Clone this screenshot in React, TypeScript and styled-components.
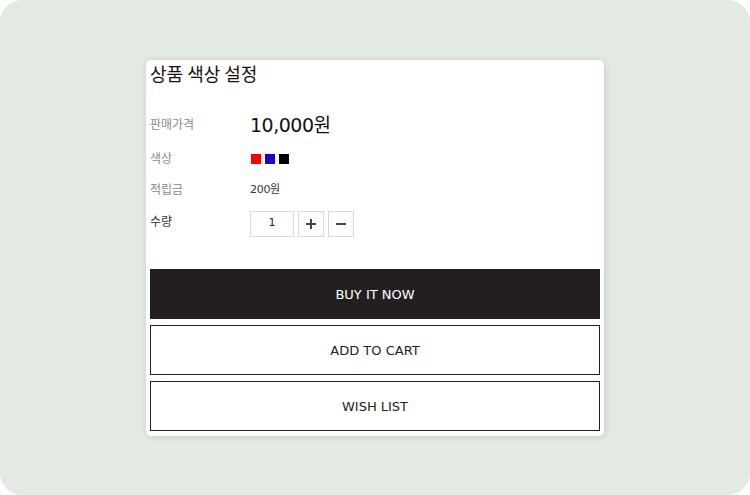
import styled, { createGlobalStyle } from 'styled-components';

const GlobalStyle = createGlobalStyle`
  html, body {
    margin: 0;
    padding: 0;
    background: #ffffff;
  }
  body {
    font-family: "DejaVu Sans", "Noto Sans CJK KR", sans-serif;
  }
  * { box-sizing: border-box; }
`

const Page = styled.div`
  width: 750px;
  height: 495px;
  background-color: #e3eae2;
  border-radius: 22px;
  display: flex;
  justify-content: center;
  align-items: flex-start;
  padding-top: 60px;
`

const Card = styled.div`
  width: 458px;
  background: #ffffff;
  border-radius: 5px;
  padding: 0 4px 5px;
  box-shadow: 1px 1px 7px rgba(60, 80, 60, 0.18);
`

const Title = styled.h2`
  margin: 0;
  font-family: "Noto Sans CJK KR", sans-serif;
  font-weight: 400;
  font-size: 18px;
  line-height: 27px;
  color: #111;
`

const InfoList = styled.div`
  display: flex;
  flex-direction: column;
  padding-top: 21px;
`

const Row = styled.div<{ $h: number; $top?: boolean }>`
  display: grid;
  grid-template-columns: 100px 1fr;
  align-items: ${(p) => (p.$top ? 'start' : 'center')};
  height: ${(p) => p.$h}px;
  padding-top: ${(p) => (p.$top ? '11px' : '0')};
`

const Label = styled.span<{ $dark?: boolean }>`
  font-family: "Noto Sans CJK KR", sans-serif;
  font-size: 12px;
  color: ${(p) => (p.$dark ? '#333' : '#8a8a8a')};
  padding-top: ${(p) => (p.$dark ? '1px' : '0')};
`

const Price = styled.span`
  font-size: 19px;
  color: #111;
  letter-spacing: -0.5px;
`

const Small = styled.span`
  font-size: 11px;
  color: #333;
  letter-spacing: -0.3px;
`

const Swatches = styled.div`
  display: flex;
  gap: 4px;
  padding-left: 1px;
  padding-top: 3px;
`

const Swatch = styled.span<{ $color: string }>`
  width: 10px;
  height: 10px;
  background: ${(p) => p.$color};
`

const Qty = styled.div`
  display: flex;
  gap: 4px;
`

const QtyInput = styled.div`
  width: 44px;
  height: 26px;
  border: 1px solid #d8d8d8;
  display: flex;
  align-items: center;
  justify-content: center;
  font-size: 11px;
  color: #222;
  padding-bottom: 3px;
`

const QtyButton = styled.button`
  width: 26px;
  height: 26px;
  border: 1px solid #d8d8d8;
  background: #fff;
  padding: 0;
  display: flex;
  align-items: center;
  justify-content: center;
`

const Actions = styled.div`
  display: flex;
  flex-direction: column;
  gap: 6px;
  margin-top: 33px;
`

const ActionButton = styled.button<{ $primary?: boolean }>`
  width: 450px;
  height: 50px;
  font-family: "DejaVu Sans", sans-serif;
  font-size: 13px;
  background: ${(p) => (p.$primary ? '#231f20' : '#ffffff')};
  color: ${(p) => (p.$primary ? '#ffffff' : '#222')};
  border: 1px solid #231f20;
  cursor: pointer;
`

const Plus = () => (
  <svg width="12" height="12" viewBox="0 0 12 12">
    <path d="M6 1v10M1 6h10" stroke="#444" strokeWidth="2" />
  </svg>
)

const Minus = () => (
  <svg width="12" height="12" viewBox="0 0 12 12">
    <path d="M1 6h10" stroke="#444" strokeWidth="2" />
  </svg>
)

export default function App() {
  return (
    <>
      <GlobalStyle />
      <Page>
        <Card>
          <Title>상품 색상 설정</Title>
          <InfoList>
            <Row $h={30}>
              <Label>판매가격</Label>
              <Price>10,000원</Price>
            </Row>
            <Row $h={38}>
              <Label>색상</Label>
              <Swatches>
                <Swatch $color="#ff0000" />
                <Swatch $color="#2200cc" />
                <Swatch $color="#000000" />
              </Swatches>
            </Row>
            <Row $h={24}>
              <Label>적립금</Label>
              <Small>200원</Small>
            </Row>
            <Row $h={36} $top>
              <Label $dark>수량</Label>
              <Qty>
                <QtyInput>1</QtyInput>
                <QtyButton><Plus /></QtyButton>
                <QtyButton><Minus /></QtyButton>
              </Qty>
            </Row>
          </InfoList>
          <Actions>
            <ActionButton $primary>BUY IT NOW</ActionButton>
            <ActionButton>ADD TO CART</ActionButton>
            <ActionButton>WISH LIST</ActionButton>
          </Actions>
        </Card>
      </Page>
    </>
  );
}
